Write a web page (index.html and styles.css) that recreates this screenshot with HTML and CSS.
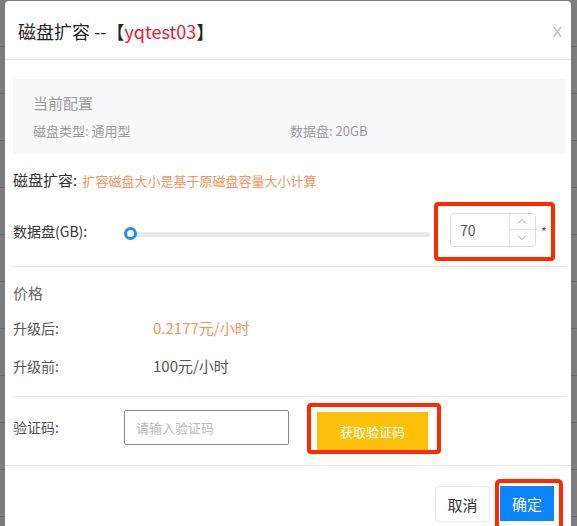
FILE: index.html
```html
<!DOCTYPE html>
<html lang="zh">
<head>
<meta charset="utf-8">
<link rel="stylesheet" href="styles.css">
</head>
<body>
<div class="backdrop">
  <div class="bg-lines">
    <div class="bg-row"></div><div class="bg-row"></div><div class="bg-row"></div><div class="bg-row"></div>
    <div class="bg-row"></div><div class="bg-row"></div><div class="bg-row"></div><div class="bg-row"></div>
    <div class="bg-row"></div><div class="bg-row"></div><div class="bg-row"></div>
  </div>
  <div class="modal">
    <div class="header">
      <div class="title">磁盘扩容 --【<span class="title-red">yqtest03</span>】</div>
      <div class="close">x</div>
    </div>
    <div class="body">
      <div class="config">
        <div class="config-title">当前配置</div>
        <div class="config-row">
          <span class="config-cell">磁盘类型: 通用型</span>
          <span class="config-cell">数据盘: 20GB</span>
        </div>
      </div>
      <div class="expand">磁盘扩容: <span class="orange small">扩容磁盘大小是基于原磁盘容量大小计算</span></div>
      <div class="slider-row">
        <div class="label">数据盘(GB):</div>
        <div class="slider">
          <div class="track"></div>
          <div class="thumb"></div>
        </div>
        <div class="hl hl-input">
          <div class="num-input">
            <div class="num-value">70</div>
            <div class="num-spin">
              <div class="spin-btn"><svg width="10" height="6" viewBox="0 0 10 6"><path d="M1 5.5 L5 1.5 L9 5.5" fill="none" stroke="#9aa3ad" stroke-width="1"/></svg></div>
              <div class="spin-btn"><svg width="10" height="6" viewBox="0 0 10 6"><path d="M1 0.5 L5 4.5 L9 0.5" fill="none" stroke="#9aa3ad" stroke-width="1"/></svg></div>
            </div>
          </div>
          <span class="star">*</span>
        </div>
      </div>
      <div class="section">
        <div class="price-title">价格</div>
        <div class="price-row"><span class="plabel">升级后:</span><span class="orange">0.2177元/小时</span></div>
        <div class="price-row"><span class="plabel">升级前:</span><span class="pval">100元/小时</span></div>
      </div>
      <div class="code-row">
        <div class="plabel code-label">验证码:</div>
        <div class="code-input">请输入验证码</div>
        <div class="hl hl-code"><div class="btn-yellow">获取验证码</div></div>
      </div>
    </div>
    <div class="footer">
      <div class="btn-cancel">取消</div>
      <div class="hl hl-ok"><div class="btn-ok">确定</div></div>
    </div>
  </div>
</div>
</body>
</html>
```
FILE: styles.css
```css
* { box-sizing: border-box; }
html, body { margin: 0; padding: 0; }
body {
  width: 577px; height: 526px; overflow: hidden;
  font-family: "Noto Sans CJK SC", "Noto Sans", sans-serif;
  background: #7d7d7d;
}
.backdrop { position: relative; width: 577px; height: 526px; overflow: hidden; }
.bg-lines { position: absolute; left: 0; top: 0; width: 577px; height: 526px; }
.bg-row { height: 44px; border-bottom: 1px solid #6a6a6a; margin-top: 3px; }
.modal {
  position: absolute; left: 5px; top: 1px;
  width: 566px; height: 540px;
  background: #fff; border-radius: 4px;
}
.header {
  height: 59px; display: flex; align-items: center; justify-content: space-between;
  padding: 2px 9px 0 13px; border-bottom: 1px solid #e8e8e8;
}
.title { font-size: 18px; color: #222; }
.title-red { color: #f5142d; }
.close { font-size: 19px; color: #b6bfc8; font-family: "Liberation Sans", sans-serif; }
.body { padding: 0 5px 0 8px; }
.config {
  margin-top: 19px; height: 75px; background: #f7f8fa;
  padding: 12px 17px 0 20px; color: #9a9a9a;
}
.config-title { font-size: 15px; line-height: 24px; }
.config-row { display: flex; margin-top: 6px; font-size: 13px; line-height: 20px; }
.config-cell { width: 257px; }
.expand { font-size: 15px; color: #333; margin-top: 15px; line-height: 22px; }
.expand .small { margin-left: 2px; }
.orange { color: #f7945a; }
.small { font-size: 13px; }
.slider-row { display: flex; align-items: center; height: 75px; padding-top: 4px; border-bottom: 1px solid #e4e4e4; }
.label { width: 105px; font-size: 14px; color: #333; }
.slider { position: relative; width: 312px; height: 14px; margin-right: 4px; margin-top: 4px; }
.track { position: absolute; left: 13px; right: 0; top: 6px; height: 5px; background: #e9e9e9; border-radius: 2px; }
.thumb { position: absolute; left: 6px; top: 1px; width: 13px; height: 13px; border: 3px solid #1890ff; border-radius: 50%; background: #fff; }
.hl { border: 4px solid #ff2a00; border-radius: 4px; }
.hl-input { display: flex; align-items: center; width: 121px; height: 59px; padding: 7px 4px 10px 12px; }
.num-input { width: 88px; height: 34px; border: 1px solid #d9d9d9; border-radius: 4px; display: flex; }
.num-value { flex: 1; font-size: 14px; color: #555; padding-left: 9px; line-height: 32px; }
.num-spin { width: 26px; border-left: 1px solid #e4e4e4; display: flex; flex-direction: column; }
.spin-btn { flex: 1; display: flex; align-items: center; justify-content: center; }
.spin-btn + .spin-btn { border-top: 1px solid #e4e4e4; }
.star { color: #f5142d; font-size: 13px; margin-left: 5px; margin-top: 4px; }
.section { padding-top: 14px; height: 130px; border-bottom: 1px solid #e8e8e8; }
.price-title { font-size: 15px; color: #666; line-height: 24px; }
.price-row { display: flex; font-size: 15px; line-height: 24px; margin-top: 11px; }
.price-row + .price-row { margin-top: 14px; }
.plabel { width: 140px; font-size: 14px; color: #555; flex: none; }
.pval { color: #555; }
.code-row { display: flex; align-items: flex-start; height: 69px; border-bottom: 1px solid #e8e8e8; margin-left: -8px; margin-right: -5px; padding-left: 8px; }
.code-label { width: 111px; margin-top: 20px; line-height: 20px; }
.code-input { width: 165px; height: 35px; margin-top: 13px; border: 1px solid #888; border-radius: 2px; font-size: 13px; color: #bbb; padding-left: 11px; line-height: 33px; }
.hl-code { margin-left: 18px; margin-top: 6px; width: 134px; height: 51px; padding: 5px 9px 0 6px; }
.btn-yellow { width: 111px; height: 38px; background: #fcbf0a; color: #fff; font-size: 13px; display: flex; align-items: center; justify-content: center; }
.footer { display: flex; justify-content: flex-end; align-items: flex-start; padding: 13px 8px 0 0; }
.btn-cancel { margin-top: 7px; width: 55px; height: 36px; border: 1px solid #e6e6e6; border-radius: 4px; font-size: 15px; color: #333; display: flex; align-items: center; justify-content: center; }
.hl-ok { margin-left: 5px; width: 68px; height: 52px; padding: 3px 5px 0 1px; border-radius: 5px; }
.btn-ok { width: 56px; height: 35px; background: #0a84ff; color: #fff; font-size: 15px; display: flex; align-items: center; justify-content: center; border-right: 2px solid #fff; }
```
